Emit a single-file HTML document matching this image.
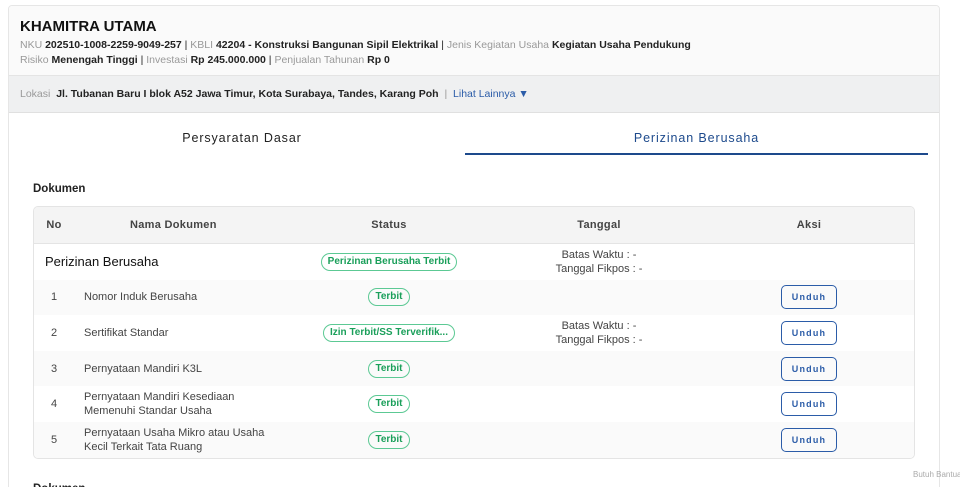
<!DOCTYPE html>
<html><head><style>
*{box-sizing:border-box;margin:0;padding:0}
html,body{width:960px;height:487px;overflow:hidden}
body{background:#fff;font-family:"Liberation Sans",sans-serif;color:#222;position:relative}
.card{position:absolute;left:8px;top:5px;width:932px;height:600px;border:1px solid #e6e6e6;border-radius:4px;background:#fff;overflow:hidden}
.hd{height:70px;background:#fafafa;border-bottom:1px solid #e4e4e4;padding:12px 11px}
.hd h1{font-size:15px;font-weight:bold;color:#111;margin-bottom:3px}
.hd p{font-size:10.5px;line-height:15px;color:#222}
.g{color:#999}
.lok{height:37px;background:#eff0f1;border-bottom:1px solid #e0e0e0;padding:0 11px;font-size:10.5px;line-height:36px}
.lok a{color:#2b5ca8}
.tabs{position:absolute;top:125px;left:12px;width:908px;height:24px}
.t{position:absolute;top:0;font-size:12.5px;letter-spacing:.9px;text-align:center;height:24px}
.t1{left:0;width:442px}
.t2{left:444px;width:463px;color:#1d4a8c;border-bottom:2px solid #1d4a8c}
.dk{position:absolute;left:24px;top:177px;font-size:11.5px;font-weight:bold}
.tb{position:absolute;left:24px;top:200px;width:882px;border:1px solid #e4e4e4;border-radius:5px;overflow:hidden}
.r{position:relative;height:35.6px;font-size:11px;color:#444}
.r div{position:absolute;top:0;height:100%;display:flex;align-items:center;line-height:14px}
.h{height:37px;background:#f4f4f4;border-bottom:1px solid #e4e4e4;font-weight:bold;font-size:11px;color:#444;letter-spacing:.3px}
.gr{background:#fafafa}
.no{left:0;width:40px;justify-content:center}
.nm{left:50px}
.st{left:245px;width:220px;justify-content:center}
.tg{left:460px;width:210px;justify-content:center;text-align:center}
.ak{left:670px;width:210px;justify-content:center}
.b{border:1px solid #5cc994;color:#1a9f5a;border-radius:9px;font-size:10px;font-weight:bold;padding:2px 6px;line-height:12px}
.u{border:1px solid #2b5ca8;color:#2b5ca8;border-radius:5px;width:56px;height:24px;display:flex;align-items:center;justify-content:center;font-size:9px;font-weight:bold;letter-spacing:1.2px}
</style></head><body>
<div class="card">
<div class="hd"><h1>KHAMITRA UTAMA</h1>
<p><span class="g">NKU</span> <b>202510-1008-2259-9049-257</b> | <span class="g">KBLI</span> <b>42204 - Konstruksi Bangunan Sipil Elektrikal</b> | <span class="g">Jenis Kegiatan Usaha</span> <b>Kegiatan Usaha Pendukung</b><br>
<span class="g">Risiko</span> <b>Menengah Tinggi</b> | <span class="g">Investasi</span> <b>Rp 245.000.000</b> | <span class="g">Penjualan Tahunan</span> <b>Rp 0</b></p></div>
<div class="lok"><span class="g">Lokasi</span>&nbsp; <b>Jl. Tubanan Baru I blok A52 Jawa Timur, Kota Surabaya, Tandes, Karang Poh</b> &nbsp;<span class="g">|</span>&nbsp; <a>Lihat Lainnya ▼</a></div>
<div class="tabs"><div class="t t1">Persyaratan Dasar</div><div class="t t2">Perizinan Berusaha</div></div>
<div class="dk">Dokumen</div>
<div class="tb">
<div class="r h"><div class="no">No</div><div class="nm" style="left:96px">Nama Dokumen</div><div class="st">Status</div><div class="tg">Tanggal</div><div class="ak">Aksi</div></div>
<div class="r"><div class="nm" style="left:11px;font-size:13px;color:#111">Perizinan Berusaha</div><div class="st"><span class="b">Perizinan Berusaha Terbit</span></div><div class="tg">Batas Waktu : -<br>Tanggal Fikpos : -</div></div>
<div class="r gr"><div class="no">1</div><div class="nm">Nomor Induk Berusaha</div><div class="st"><span class="b">Terbit</span></div><div class="ak"><span class="u">Unduh</span></div></div>
<div class="r"><div class="no">2</div><div class="nm">Sertifikat Standar</div><div class="st"><span class="b">Izin Terbit/SS Terverifik...</span></div><div class="tg">Batas Waktu : -<br>Tanggal Fikpos : -</div><div class="ak"><span class="u">Unduh</span></div></div>
<div class="r gr"><div class="no">3</div><div class="nm">Pernyataan Mandiri K3L</div><div class="st"><span class="b">Terbit</span></div><div class="ak"><span class="u">Unduh</span></div></div>
<div class="r"><div class="no">4</div><div class="nm">Pernyataan Mandiri Kesediaan<br>Memenuhi Standar Usaha</div><div class="st"><span class="b">Terbit</span></div><div class="ak"><span class="u">Unduh</span></div></div>
<div class="r gr"><div class="no">5</div><div class="nm">Pernyataan Usaha Mikro atau Usaha<br>Kecil Terkait Tata Ruang</div><div class="st"><span class="b">Terbit</span></div><div class="ak"><span class="u">Unduh</span></div></div>
</div>
<div style="position:absolute;left:24px;top:477px;font-size:11.5px;font-weight:bold">Dokumen</div>
</div>
<div style="position:absolute;left:913px;top:470px;font-size:8px;color:#aaa;white-space:nowrap">Butuh Bantuan</div>
</body></html>
